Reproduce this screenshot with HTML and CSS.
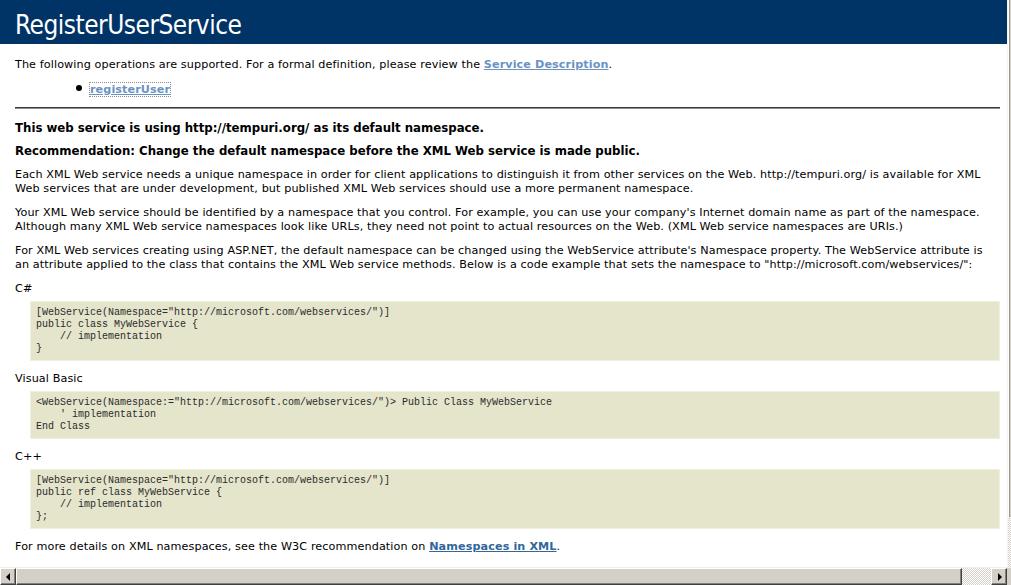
FILE: index.html
```html
<!DOCTYPE html>
<html>
<head>
<meta charset="utf-8">
<title>RegisterUserService Web Service</title>
<link rel="stylesheet" href="styles.css">
</head>
<body>
<div class="window">
  <div class="viewport">
    <div class="page">
      <div class="heading1">RegisterUserService</div>
      <div class="content">
        <p class="intro first">The following operations are supported. For a formal definition, please review the <a class="visited" href="#">Service Description</a>.</p>
        <ul class="ops">
          <li><a class="visited focused" href="#">registerUser</a></li>
        </ul>
        <div class="rule"></div>
        <h3 class="h-first">This web service is using http://tempuri.org/ as its default namespace.</h3>
        <h3>Recommendation: Change the default namespace before the XML Web service is made public.</h3>
        <p class="intro">Each XML Web service needs a unique namespace in order for client applications to distinguish it from other services on the Web. http://tempuri.org/ is available for XML Web services that are under development, but published XML Web services should use a more permanent namespace.</p>
        <p class="intro">Your XML Web service should be identified by a namespace that you control. For example, you can use your company's Internet domain name as part of the namespace. Although many XML Web service namespaces look like URLs, they need not point to actual resources on the Web. (XML Web service namespaces are URIs.)</p>
        <p class="intro">For XML Web services creating using ASP.NET, the default namespace can be changed using the WebService attribute's Namespace property. The WebService attribute is an attribute applied to the class that contains the XML Web service methods. Below is a code example that sets the namespace to "http://microsoft.com/webservices/":</p>
        <p class="intro lang">C#</p>
        <pre class="code">[WebService(Namespace="http://microsoft.com/webservices/")]
public class MyWebService {
    // implementation
}</pre>
        <p class="intro lang">Visual Basic</p>
        <pre class="code">&lt;WebService(Namespace:="http://microsoft.com/webservices/")&gt; Public Class MyWebService
    ' implementation
End Class</pre>
        <p class="intro lang">C++</p>
        <pre class="code">[WebService(Namespace="http://microsoft.com/webservices/")]
public ref class MyWebService {
    // implementation
};</pre>
        <p class="intro">For more details on XML namespaces, see the W3C recommendation on <a href="#">Namespaces in XML</a>.</p>
        <p class="intro">For more details on WSDL, see the <a href="#">WSDL Specification</a>.</p>
        <p class="intro">For more details on URIs, see <a href="#">RFC 2396</a>.</p>
      </div>
    </div>
    <div class="vscroll"><div class="vtrack"></div></div>
  </div>
  <div class="hscroll">
    <div class="sbtn"><span class="arrow-left"></span></div>
    <div class="thumb"></div>
    <div class="track"></div>
    <div class="sbtn"><span class="arrow-right"></span></div>
    <div class="corner"></div>
  </div>
</div>
</body>
</html>
```

FILE: styles.css
```css
html, body {
  margin: 0;
  padding: 0;
  background: #ffffff;
}

.window {
  width: 1011px;
  height: 585px;
  display: flex;
  flex-direction: column;
  overflow: hidden;
}

.viewport {
  flex: 1;
  display: flex;
  min-height: 0;
  overflow: hidden;
}

.page {
  width: 1007px;
  flex: none;
  overflow: hidden;
  font-family: "DejaVu Sans", Verdana, sans-serif;
  color: #000;
}

.heading1 {
  height: 44px;
  box-sizing: border-box;
  background: #003366;
  color: #ffffff;
  font-family: "DejaVu Sans Condensed", Tahoma, sans-serif;
  font-size: 26px;
  line-height: 31px;
  padding: 10px 0 3px 15px;
  letter-spacing: -0.5px;
}

.content {
  padding: 14px 7px 0 30px;
  font-size: 11.2px;
  line-height: 14px;
  letter-spacing: 0.1px;
}

p {
  margin: 0 0 10.33px;
}

.intro {
  margin-left: -15px;
}

.intro.first {
  margin-bottom: 0;
}

a {
  color: #336699;
  font-weight: bold;
  text-decoration: underline;
}

a.visited {
  color: #6a93c4;
}

a.focused {
  outline: 1px dotted #8a8a8a;
  outline-offset: 0;
}

.ops {
  margin: 11px 0 0 20px;
  padding-left: 40px;
  list-style: none;
}

.ops li {
  margin: 0;
}

.ops li::before {
  content: "";
  display: inline-block;
  width: 6px;
  height: 6px;
  border-radius: 50%;
  background: #000;
  margin-left: -14px;
  margin-right: 8px;
  vertical-align: 2px;
}

.rule {
  margin: 10px 0 0 -15px;
  height: 0;
  border-top: 1px solid #3a3a3a;
  border-bottom: 1px solid #8f8f8f;
}

h3 {
  font-size: 11.75px;
  line-height: 15px;
  font-weight: bold;
  letter-spacing: 0;
  margin: 0 0 9px -15px;
}

h3.h-first {
  margin-top: 11.5px;
  margin-bottom: 8px;
}

.lang {
  margin-bottom: 4.5px;
}

.code {
  margin: 0 0 11.5px;
  background: #e5e5cc;
  border: 1px solid #f0f0e0;
  padding: 5px;
  font-family: "Liberation Mono", "Courier New", monospace;
  font-size: 10px;
  line-height: 12px;
  letter-spacing: 0;
  color: #2a2a2a;
}

/* scrollbars */
.vscroll {
  flex: 1;
  background: #ffffff;
  border-left: 1px solid #f4f4f4;
  display: flex;
  flex-direction: column;
  justify-content: flex-end;
  box-shadow: inset -1px 0 0 #d4d0c8, inset -2px 0 0 #9c9a94;
}

.vtrack {
  height: 50px;
  background-color: #ffffff;
  background-image: repeating-conic-gradient(#d4d0c8 0 25%, #ffffff 0 50%);
  background-size: 2px 2px;
}

.hscroll {
  height: 18px;
  flex: none;
  display: flex;
  border-top: 1px solid #f0efe9;
  box-sizing: border-box;
  background: #d4d0c8;
}

.sbtn {
  width: 16px;
  flex: none;
  box-sizing: border-box;
  background: #d4d0c8;
  border-top: 1px solid #ffffff;
  border-left: 1px solid #ffffff;
  border-right: 1px solid #404040;
  border-bottom: 1px solid #404040;
  box-shadow: inset -1px -1px 0 #808080;
  display: flex;
  align-items: center;
  justify-content: center;
}

.arrow-left {
  width: 0;
  height: 0;
  border-top: 4px solid transparent;
  border-bottom: 4px solid transparent;
  border-right: 4px solid #000;
  margin-right: 1px;
}

.arrow-right {
  width: 0;
  height: 0;
  border-top: 4px solid transparent;
  border-bottom: 4px solid transparent;
  border-left: 4px solid #000;
  margin-left: 1px;
}

.thumb {
  width: 946px;
  flex: none;
  box-sizing: border-box;
  background: #d4d0c8;
  border-top: 1px solid #ffffff;
  border-left: 1px solid #ffffff;
  border-right: 1px solid #404040;
  border-bottom: 1px solid #404040;
  box-shadow: inset -1px -1px 0 #808080;
}

.track {
  flex: 1;
  background-color: #ffffff;
  background-image: repeating-conic-gradient(#d4d0c8 0 25%, #ffffff 0 50%);
  background-size: 2px 2px;
}

.corner {
  width: 4px;
  flex: none;
  background: #d4d0c8;
}
```
